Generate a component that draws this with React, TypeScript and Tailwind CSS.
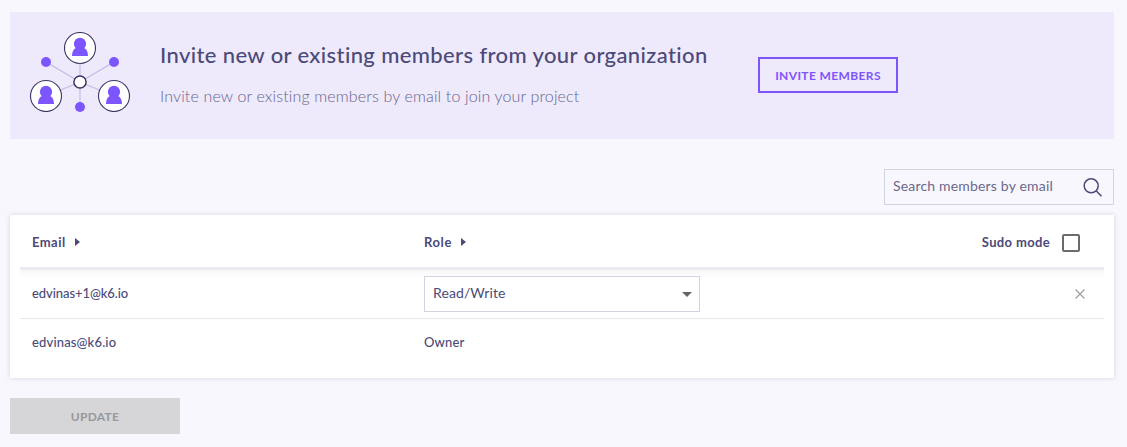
import type { ReactNode } from "react";

function Person({ x, y }: { x: number; y: number }) {
  return (
    <g transform={`translate(${x} ${y})`}>
      <circle r="15.5" fill="#fff" stroke="#3b3561" strokeWidth="1.1" />
      <circle cx="0" cy="-4.1" r="6.1" fill="#7d55fc" />
      <path d="M-8 8C-8 4-6.6 1-3.8-.2h7.6C6.6 1 8 4 8 8z" fill="#7d55fc" />
    </g>
  );
}

function Network() {
  return (
    <svg className="h-20 w-[100px] shrink-0" viewBox="0 0 100 80">
      <path d="M50 50V16M50 50V75M50 50L16 30M50 50L84 30M50 50L16 64M50 50L84 64" stroke="#c4b9e0" strokeWidth="1.1" />
      <circle cx="16" cy="30" r="5" fill="#7d55fc" />
      <circle cx="84" cy="30" r="5" fill="#7d55fc" />
      <circle cx="50" cy="75" r="5" fill="#7d55fc" />
      <Person x={50} y={16} />
      <Person x={16} y={64} />
      <Person x={84} y={64} />
      <circle cx="50" cy="50" r="6.1" fill="#fff" stroke="#3b3561" strokeWidth="1.5" />
    </svg>
  );
}

function Heading({ children, className }: { children: ReactNode; className: string }) {
  return (
    <div className="flex items-center gap-[9px]">
      <span className={`text-[13px] leading-4 font-bold ${className}`}>{children}</span>
      <svg className="h-2 w-[5px]" viewBox="0 0 5 8" fill="#4b4a78">
        <path d="M0 0L5 4L0 8z" />
      </svg>
    </div>
  );
}

export default function App() {
  return (
    <div className="h-[447px] w-[1127px] bg-[#f8f7fd] pt-3 pr-[13px] pl-[10px] font-['Lato',sans-serif] whitespace-nowrap text-[#4b4a78]">
      <section className="flex h-[127px] items-start bg-[#eee9fb] pt-5 pl-5">
        <Network />
        <div className="ml-[30px] w-[598px] pt-[9px]">
          <h1 className="text-[22px] leading-7 font-medium tracking-[0.39px]">Invite new or existing members from your organization</h1>
          <p className="mt-[17px] text-[16px] leading-5 font-light tracking-[0.15px] text-[#66648c]">Invite new or existing members by email to join your project</p>
        </div>
        <button className="mt-[25px] h-9 w-[140px] border-2 border-[#7d55fc] pt-px text-[12px] leading-4 font-bold tracking-[0.38px] text-[#7d55fc]">INVITE MEMBERS</button>
      </section>

      <label className="mt-[30px] ml-auto flex h-9 w-[230px] items-center justify-between border border-[#d3d2e0] pr-[11px] pl-2">
        <span className="pb-0.5 text-[14px] leading-5 tracking-[0.18px] text-[#6a688c]">Search members by email</span>
        <svg className="h-[19px] w-[19px]" viewBox="0 0 19 19" fill="none" stroke="#4b4a78" strokeWidth="1.5">
          <circle cx="8.2" cy="7.8" r="7" />
          <path d="M13.1 12.8L18.5 18.3" />
        </svg>
      </label>

      <section className="mt-[10px] h-[163px] bg-white px-[10px] shadow-[0_0_5px_rgba(60,60,90,0.17)]">
        <header className="flex h-[55px] items-center border-b-[3px] border-[#ebeaf0] pt-[3px] pl-3">
          <div className="w-[392px] pb-0.5"><Heading className="tracking-[0.45px]">Email</Heading></div>
          <div className="pb-0.5"><Heading className="tracking-[0.6px]">Role</Heading></div>
          <label className="mr-6 ml-auto flex items-center gap-3">
            <span className="pb-0.5 text-[13px] leading-4 font-bold tracking-[0.35px]">Sudo mode</span>
            <span className="h-[18px] w-[18px] rounded-[2px] border-2 border-[#6b6b6b]" />
          </label>
        </header>
        <div className="flex h-[49px] items-center border-b border-[#e7e7ec] bg-linear-to-b from-[#f7f7f7] to-white to-[8px] pl-3">
          <span className="w-[392px] pb-0.5 text-[13px] leading-4 font-medium tracking-[-0.08px]">edvinas+1@k6.io</span>
          <div className="flex h-9 w-[276px] items-center justify-between border border-[#d3d2e0] bg-white pr-[7px] pl-2">
            <span className="pb-0.5 text-[14px] leading-5 tracking-[0.1px]">Read/Write</span>
            <svg className="h-[5px] w-[10px]" viewBox="0 0 10 5" fill="#656565"><path d="M0 0h10L5 5z" /></svg>
          </div>
          <svg className="mr-[19px] ml-auto h-[10px] w-[10px]" viewBox="0 0 10 10" stroke="#a0a0a0" strokeWidth="1.3"><path d="M.5.5L9.5 9.5M9.5.5L.5 9.5" /></svg>
        </div>
        <div className="flex h-[46px] items-center pl-3 text-[13px] leading-4 font-medium tracking-[0.15px]">
          <span className="w-[392px]">edvinas@k6.io</span>
          <span>Owner</span>
        </div>
      </section>

      <button className="mt-5 block h-9 w-[170px] bg-[#d6d6d8] pt-0.5 text-[12px] leading-4 font-bold tracking-[0.3px] text-[#98989b]">UPDATE</button>
    </div>
  );
}
